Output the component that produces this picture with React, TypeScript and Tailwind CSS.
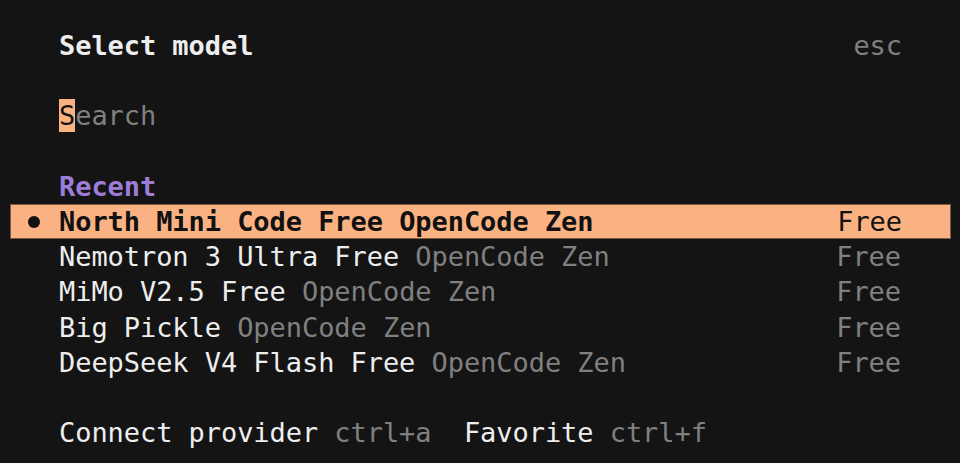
import React from 'react';

const models = [
    { name: 'North Mini Code Free', provider: 'OpenCode Zen', price: 'Free', current: true },
    { name: 'Nemotron 3 Ultra Free', provider: 'OpenCode Zen', price: 'Free' },
    { name: 'MiMo V2.5 Free', provider: 'OpenCode Zen', price: 'Free' },
    { name: 'Big Pickle', provider: 'OpenCode Zen', price: 'Free' },
    { name: 'DeepSeek V4 Flash Free', provider: 'OpenCode Zen', price: 'Free' },
];

export default function App() {
    return (
        <div
            className="min-h-screen bg-[#141414] pt-[28px] text-[27px] leading-[35.2px] tracking-[-0.06px] text-[#eeeeee] whitespace-pre"
            style={{ fontFamily: '"DejaVu Sans Mono", "Liberation Mono", monospace' }}
        >
            {/* Header */}
            <div className="flex justify-between pl-[59px] pr-[58px] h-[35.2px]">
                <span className="font-bold">Select model</span>
                <span className="text-[#808080]">esc</span>
            </div>
            <div className="h-[35.2px]" />

            {/* Search */}
            <div className="flex pl-[59px] h-[35.2px] items-center">
                <span className="bg-[#fab283] text-[#141414] leading-[33px]">S</span>
                <span className="text-[#808080]">earch</span>
            </div>
            <div className="h-[35.2px]" />

            {/* Recent */}
            <div className="pl-[59px] h-[35.2px] font-bold text-[#9d7cd8]">Recent</div>
            <div className="flex flex-col">
                {models.map((m) => (
                    <div
                        key={m.name}
                        className={
                            m.current
                                ? 'ml-[10px] mr-[9px] flex h-[35.2px] items-center justify-between bg-[#fab283] border border-[#7a5a42] text-[#111111] pl-[48px] pr-[48px] relative'
                                : 'mx-[10px] flex h-[35.2px] items-center justify-between pl-[49px] pr-[49px]'
                        }
                    >
                        {m.current && (
                            <span className="absolute left-[17px] top-[11px] w-[12px] h-[12px] rounded-full bg-[#111111]" />
                        )}
                        <span>
                            {m.current ? (
                                <span className="font-bold">{m.name} {m.provider}</span>
                            ) : (
                                <>
                                    <span>{m.name}</span>
                                    <span className="text-[#808080]"> {m.provider}</span>
                                </>
                            )}
                        </span>
                        <span className={m.current ? '' : 'text-[#808080]'}>{m.price}</span>
                    </div>
                ))}
            </div>
            <div className="h-[35.2px]" />

            {/* Footer */}
            <div className="pl-[59px] h-[35.2px]">
                <span>Connect provider</span>
                <span className="text-[#808080]"> ctrl+a</span>
                <span>  Favorite</span>
                <span className="text-[#808080]"> ctrl+f</span>
            </div>
        </div>
    );
}
